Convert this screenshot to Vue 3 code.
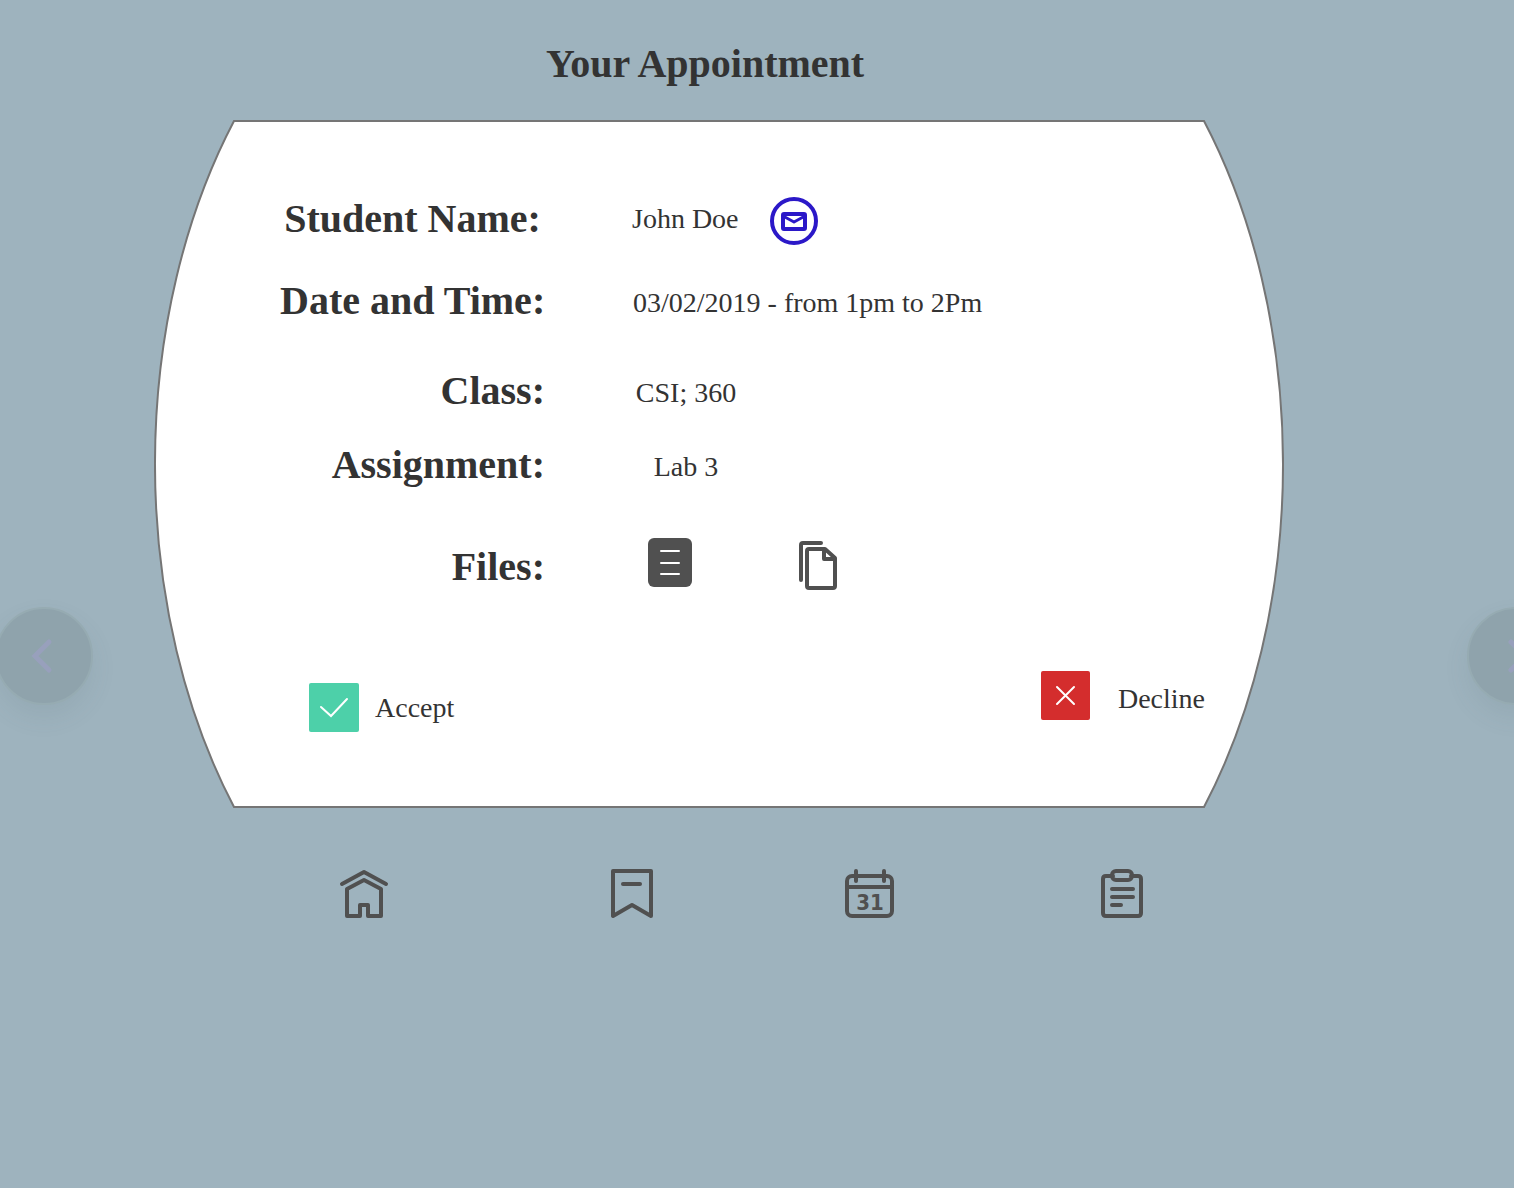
<script setup>
const details = [
  { key: 'student', label: 'Student Name:', value: 'John Doe' },
  { key: 'date', label: 'Date and Time:', value: '03/02/2019 - from 1pm to 2Pm' },
  { key: 'class', label: 'Class:', value: 'CSI; 360' },
  { key: 'assignment', label: 'Assignment:', value: 'Lab 3' },
]
</script>

<template>
  <div class="page">
    <header class="header">
      <h1>Your Appointment</h1>
    </header>

    <main class="card">
      <svg class="card-shape" viewBox="0 0 1130 688" preserveAspectRatio="none" aria-hidden="true">
        <path d="M80 1H1050A362 550 0 0 1 1050 687H80A362 550 0 0 1 80 1Z" vector-effect="non-scaling-stroke" />
      </svg>

      <dl class="details">
        <div v-for="item in details" :key="item.key" class="row" :class="item.key">
          <dt>{{ item.label }}</dt>
          <dd class="value">{{ item.value }}</dd>
          <dd v-if="item.key === 'student'" class="mail-cell">
            <button type="button" class="mail" aria-label="Email student">
              <svg width="48" height="48" viewBox="0 0 48 48">
                <circle cx="24" cy="24" r="22" />
                <rect x="13" y="17" width="22" height="15" rx="1" />
                <path d="M13 19l11 6 11-6" />
              </svg>
            </button>
          </dd>
        </div>
        <div class="row files">
          <dt>Files:</dt>
          <dd class="file-list">
            <button type="button" aria-label="Open document">
              <svg width="44" height="50" viewBox="0 0 44 50">
                <rect class="solid" x="0" y="0" width="44" height="49" rx="6" />
                <path class="lines" d="M13 13h18M13 25h18M13 36h18" />
              </svg>
            </button>
            <button type="button" aria-label="Copy files">
              <svg class="outline" width="40" height="56" viewBox="0 -6 40 56">
                <path d="M3 39V4q0-2 2-2h18" />
                <path d="M11 8h16l10 9v28q0 2-2 2H11q-2 0-2-2V10q0-2 2-2Z" />
                <path d="M26 9v9h10" />
              </svg>
            </button>
          </dd>
        </div>
      </dl>

      <div class="actions">
        <button type="button" class="action accept">
          <svg width="50" height="50" viewBox="0 0 50 50" aria-hidden="true">
            <rect width="50" height="49" rx="2" />
            <path d="M12 24l10 9 16-17" />
          </svg>
          <span>Accept</span>
        </button>
        <button type="button" class="action decline">
          <svg width="49" height="50" viewBox="0 0 49 50" aria-hidden="true">
            <rect width="49" height="49" rx="2" />
            <path d="M16 16l17 17M33 16L16 33" />
          </svg>
          <span>Decline</span>
        </button>
      </div>
    </main>

    <nav class="nav" aria-label="Main">
      <a href="#home" aria-label="Home">
        <svg class="outline" width="50" height="50" viewBox="0 0 50 50">
          <path d="M3 15L25 3l22 12" />
          <path d="M8 20v27h13V36h8v11h13V20L25 11Z" />
        </svg>
      </a>
      <a href="#saved" aria-label="Saved">
        <svg class="outline" width="50" height="50" viewBox="0 0 50 50">
          <path d="M6 2h38v45l-19-11L6 47Z" />
          <path d="M16 15h17" />
        </svg>
      </a>
      <a href="#calendar" aria-label="Calendar">
        <svg class="outline" width="50" height="50" viewBox="0 0 50 50">
          <rect x="2" y="7" width="45" height="40" rx="5" />
          <path d="M2 18h45M11 2v10M39 2v10" />
          <text x="25" y="41">31</text>
        </svg>
      </a>
      <a href="#tasks" aria-label="Tasks">
        <svg class="outline" width="50" height="50" viewBox="0 0 50 50">
          <path d="M16 7H9q-3 0-3 3v34q0 3 3 3h32q3 0 3-3V10q0-3-3-3h-7" />
          <rect x="15" y="2" width="20" height="9" rx="4" />
          <path d="M15 20h21M15 28h21M15 36h9" />
        </svg>
      </a>
    </nav>

    <button type="button" class="pager previous" aria-label="Previous appointment">
      <svg width="24" height="36" viewBox="0 0 24 36"><path d="M20 4L6 18l14 14" /></svg>
    </button>
    <button type="button" class="pager next" aria-label="Next appointment">
      <svg width="24" height="36" viewBox="0 0 24 36"><path d="M4 4l14 14L4 32" /></svg>
    </button>
  </div>
</template>

<style>
body {
  margin: 0;
  background: #9eb3be;
}
</style>

<style scoped>
.page {
  position: relative;
  box-sizing: border-box;
  min-height: 100vh;
  padding: 40px 230px 40px 154px;
  overflow: hidden;
  background: #9eb3be;
  color: #333;
  font-family: "Liberation Serif", "Times New Roman", serif;
  font-size: 28px;
  line-height: 32px;
}

.header {
  padding-right: 28px;
  text-align: center;
}

h1 {
  margin: 0 0 32px;
  font-size: 40px;
  line-height: 48px;
}

.card {
  position: relative;
  padding: 75px 79px 75px 126px;
}

.card-shape {
  position: absolute;
  inset: 0;
  width: 100%;
  height: 100%;
}

.card-shape path {
  fill: #fff;
  stroke: #757575;
  stroke-width: 2;
}

.details {
  position: relative;
  margin: 0;
}

.row {
  display: flex;
  align-items: center;
  height: 48px;
}

dt {
  flex: none;
  width: 265px;
  margin-right: 87px;
  font-size: 40px;
  font-weight: bold;
  line-height: 48px;
  text-align: right;
  white-space: nowrap;
}

dd {
  margin: 0;
}

.value {
  min-width: 106px;
  text-align: center;
  white-space: nowrap;
}

.row:not(.student) .value {
  padding: 4px 0 0 1px;
}

.student dt,
.date dt {
  text-align: center;
}

.date {
  margin-top: 34px;
}

.class {
  margin-top: 42px;
}

.assignment {
  margin-top: 26px;
}

.files {
  margin-top: 54px;
}

.mail-cell {
  display: flex;
  margin-left: 31px;
  padding-top: 4px;
}

.file-list {
  display: flex;
  align-items: center;
  gap: 106px;
  margin-left: 16px;
  padding-bottom: 8px;
}

button {
  padding: 0;
  border: 0;
  background: none;
  color: inherit;
  font: inherit;
  cursor: pointer;
}

svg {
  display: block;
  flex: none;
}

.mail {
  fill: none;
  stroke: #2b18c8;
  stroke-width: 4;
  stroke-linejoin: round;
}

.mail path {
  stroke-width: 3;
}

.solid {
  fill: #505050;
}

.lines {
  fill: none;
  stroke: #fff;
  stroke-width: 2;
  stroke-linecap: round;
}

.outline {
  fill: none;
  stroke: #505050;
  stroke-width: 4;
  stroke-linecap: round;
  stroke-linejoin: round;
}

.outline text {
  fill: #505050;
  stroke: none;
  font-family: "DejaVu Sans Condensed", "DejaVu Sans", sans-serif;
  font-size: 22px;
  font-weight: bold;
  text-anchor: middle;
}

.actions {
  position: relative;
  display: flex;
  justify-content: space-between;
  align-items: flex-start;
  margin: 80px 0 0 29px;
}

.action {
  display: flex;
  align-items: center;
  gap: 16px;
}

.action path {
  fill: none;
  stroke: #fff;
  stroke-width: 2;
  stroke-linecap: round;
}

.accept {
  margin-top: 12px;
}

.accept rect {
  fill: #4dd0a9;
}

.decline {
  gap: 28px;
}

.decline span {
  padding-top: 6px;
}

.decline rect {
  fill: #d42d2d;
}

.nav {
  display: grid;
  grid-template-columns: 268fr 238fr 252fr 50px;
  justify-items: start;
  padding: 61px 137px 0 185px;
}

.pager {
  position: absolute;
  top: 607px;
  display: flex;
  align-items: center;
  justify-content: center;
  box-sizing: border-box;
  width: 98px;
  height: 98px;
  border: 2px solid #96abb2;
  border-radius: 50%;
  background: #8fa3ac;
  box-shadow: 0 12px 24px rgba(80, 100, 110, 0.1);
}

.previous {
  left: -5px;
  padding-right: 6px;
}

.next {
  right: -51px;
  padding-left: 6px;
}

.pager path {
  fill: none;
  stroke: #98a0bc;
  stroke-width: 5;
  stroke-linecap: round;
}
</style>
